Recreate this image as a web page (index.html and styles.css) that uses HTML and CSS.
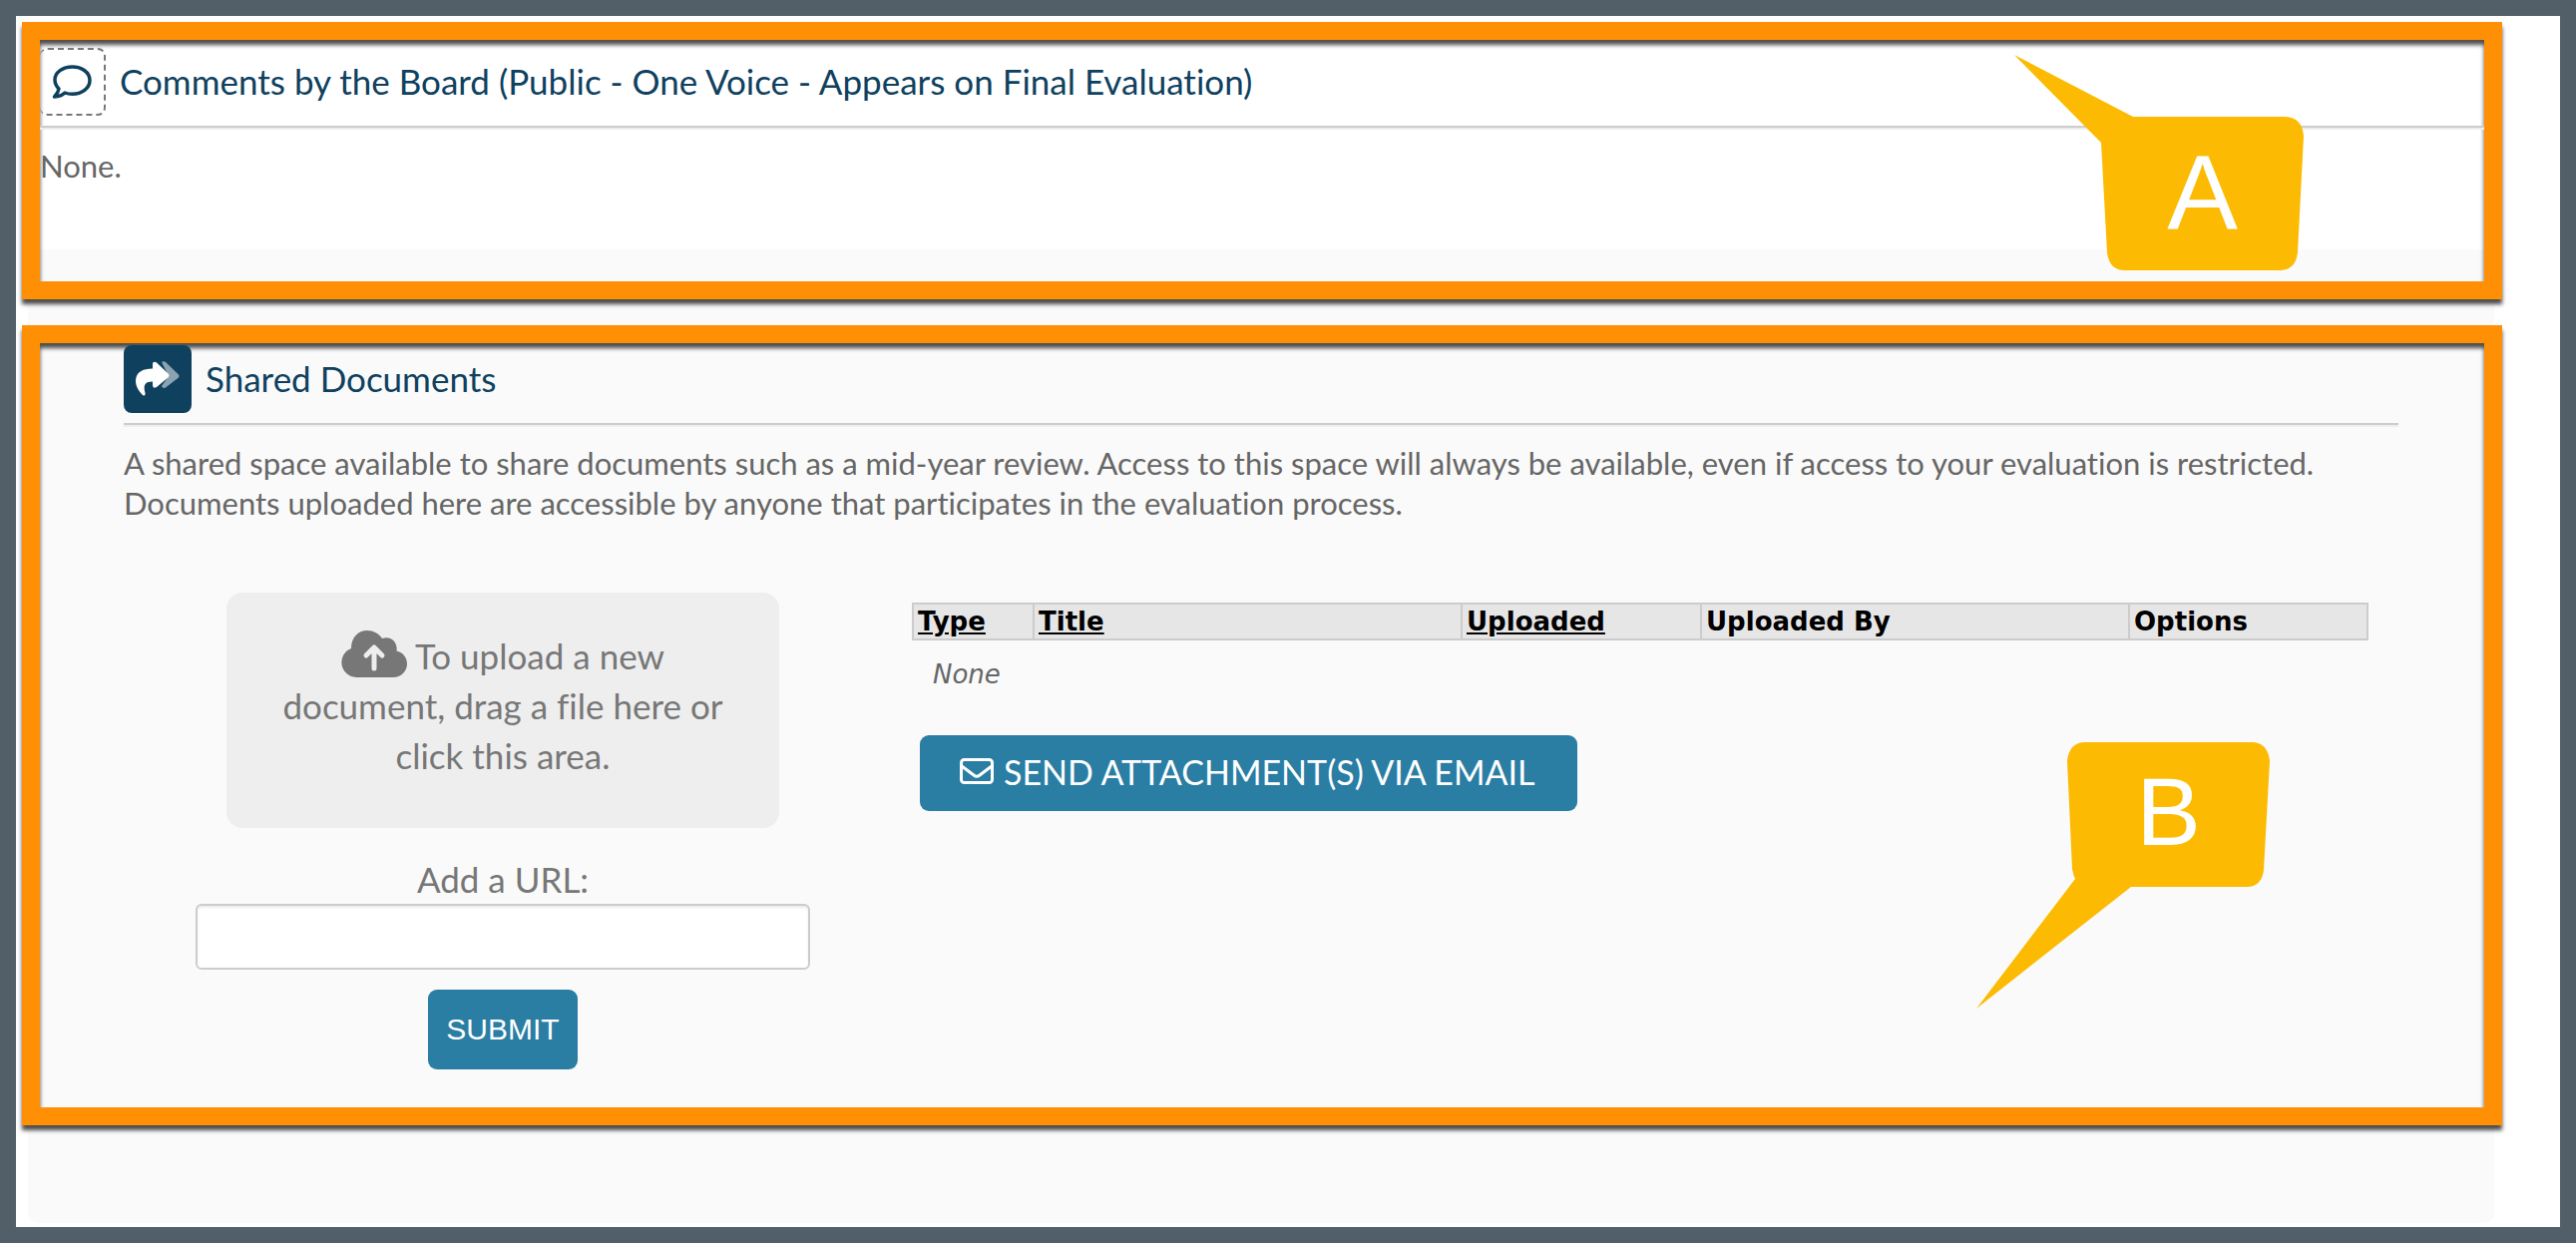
FILE: index.html
```
<!DOCTYPE html>
<html lang="en">
<head>
    <meta charset="UTF-8">
    <meta name="viewport" content="width=device-width, initial-scale=1.0">
    <title>Board Evaluation</title>
    <link rel="stylesheet" href="styles.css">
</head>
<body>

<main class="page">
    <div class="panel">
        <section class="frame comments">
            <div class="comments-body">
                <div class="section-title">
                    <span class="icon-box dashed">
                        <svg width="40" height="34" viewBox="0 0 40 34" aria-hidden="true">
                            <path d="M20.500 2C11 2 3 7.500 3 15C3 18.500 4.500 21.500 7 24C6.500 27 5 29.500 2.500 32C7 31.800 10.500 30.500 13 28C15.500 29 18 29.300 20.500 29.300C30 29.300 38 23.500 38 15.500C38 7.500 30 2 20.500 2Z" fill="none" stroke="#0f415f" stroke-width="3.500" stroke-linejoin="round"/>
                        </svg>
                    </span>
                    <h2>Comments by the Board (Public - One Voice - Appears on Final Evaluation)</h2>
                </div>
                <p class="text">None.</p>
            </div>
        </section>

        <section class="frame documents">
            <div class="section-title">
                <span class="icon-box filled">
                    <svg width="44" height="36" viewBox="0 0 44 36" aria-hidden="true">
                        <path d="M26 1C27 0 29 0 30 1L43 13.500Q44 15 43 16.500L30 26.500Q27 28 26 25L33 15Z" fill="#8ba2b0"/>
                        <path d="M17 3C17 0.500 19.500 0 21 1.500L33 13Q34 14.500 33 16L21 26Q17 28 17 24V20.500C10 20.500 7 23 9.500 32C10 34.500 8 35.500 6.500 33.500C3 30 0 25 0 20C0 11 7 7.500 17 7.500Z" fill="#fff"/>
                    </svg>
                </span>
                <h2>Shared Documents</h2>
            </div>
            <p class="text">A shared space available to share documents such as a mid-year review. Access to this space will always be available, even if access to your evaluation is restricted. Documents uploaded here are accessible by anyone that participates in the evaluation process.</p>

            <div class="columns">
                <form class="upload" action="#" method="post">
                    <button type="button" class="drop-area">
                        <svg class="cloud" width="66" height="47" viewBox="0 0 66 47" aria-hidden="true">
                            <path d="M15 47A15 15 0 0 1 10 18C10 7 17 0 26 0C32 0 38 3 41 8C49 5 57 11 55.500 20.500C62 22 66 27 66 33.500C66 41 60 47 52 47Z" fill="#777"/>
                            <path d="M33 38V18M25 25L33 17L41 25" fill="none" stroke="#eee" stroke-width="5" stroke-linecap="round" stroke-linejoin="round"/>
                        </svg>
                        To upload a new document, drag a file here or click this area.
                    </button>
                    <label for="url">Add a URL:</label>
                    <input type="text" id="url" name="url">
                    <button type="submit" class="btn submit">SUBMIT</button>
                </form>

                <div class="files">
                    <table>
                        <thead>
                            <tr>
                                <th class="col-type"><a href="#">Type</a></th>
                                <th class="col-wide"><a href="#">Title</a></th>
                                <th class="col-date"><a href="#">Uploaded</a></th>
                                <th class="col-wide">Uploaded By</th>
                                <th>Options</th>
                            </tr>
                        </thead>
                        <tbody>
                            <tr>
                                <td colspan="5">None</td>
                            </tr>
                        </tbody>
                    </table>
                    <button type="button" class="btn email">
                        <svg width="34" height="26" viewBox="0 0 34 26" aria-hidden="true">
                            <rect x="1.500" y="1.500" width="31" height="23" rx="3" fill="none" stroke="#fff" stroke-width="3"/>
                            <path d="M2 8L14 17Q17 19.500 20 17L32 8" fill="none" stroke="#fff" stroke-width="3"/>
                        </svg>
                        SEND ATTACHMENT(S) VIA EMAIL
                    </button>
                </div>
            </div>
        </section>
    </div>

    <div class="callout callout-a">
        <svg width="290" height="216" viewBox="0 0 290 216" aria-hidden="true">
            <path d="M0 0L119 62H270Q289 62 290 82L284 198Q282 216 266 216H111Q95 216 93 198L87 88Z" fill="#fcbb02"/>
        </svg>
        <span>A</span>
    </div>
    <div class="callout callout-b">
        <svg width="294" height="267" viewBox="0 0 294 267" aria-hidden="true">
            <path d="M0 267L99 137Q97 133 96 127L91 19Q93 0 109 0H276Q292 0 294 19L288 128Q286 145 271 145H155Z" fill="#fcbb02"/>
        </svg>
        <span>B</span>
    </div>
</main>

</body>
</html>
```
FILE: styles.css
```
* {
    box-sizing: border-box;
}
body {
    margin: 0;
    min-height: 100vh;
    padding: 16px;
    background-color: #525f68;
    font-family: Lato, sans-serif;
    font-variant-ligatures: none;
    color: #666;
    display: flex;
}
.page {
    position: relative;
    display: flex;
    flex: 1;
    padding: 6px 66px 4px 12px;
    background-color: #fff;
}
.panel {
    flex: 1;
    background-color: #fafafa;
    border-radius: 0 0 10px 10px;
}
.frame {
    margin: 0 -8px 0 -6px;
    border: 18px solid #ff9005;
    box-shadow: 0 5px 4px rgba(0, 0, 0, 0.7), inset 0 5px 4px rgba(0, 0, 0, 0.7);
}
h2 {
    margin: 0;
    padding-bottom: 2px;
    font-size: 35px;
    font-weight: 400;
    line-height: 44px;
    color: #0f415f;
}
.section-title {
    display: flex;
    align-items: center;
    gap: 14px;
    padding-bottom: 10px;
    border-bottom: 2px solid #ccc;
    box-shadow: 0 2px 0 #eee;
}
.icon-box {
    display: flex;
    align-items: center;
    justify-content: center;
    width: 68px;
    height: 68px;
    border-radius: 8px;
}
.dashed {
    width: 66px;
    border: 2px dashed #777;
    border-left: none;
}
.filled {
    background-color: #0f415f;
}
.text {
    margin: 0;
    padding-top: 18px;
    font-size: 31px;
    line-height: 40px;
}
.comments {
    min-height: 278px;
}
.comments-body {
    min-height: 210px;
    padding-top: 8px;
    background-color: #fff;
    box-shadow: inset 0 5px 4px rgba(0, 0, 0, 0.7);
}
.documents {
    margin-top: 26px;
    padding: 2px 86px 38px 84px;
}
.columns {
    display: flex;
    align-items: flex-start;
    gap: 102px;
    padding: 70px 30px 0 72px;
}
.upload {
    display: flex;
    flex-direction: column;
    align-items: center;
    width: 616px;
    font-size: 35px;
    line-height: 50px;
    color: #777;
}
.drop-area {
    width: 554px;
    height: 236px;
    padding: 0 50px 10px;
    border: none;
    border-radius: 16px;
    background-color: #eee;
    font: inherit;
    color: #777;
    cursor: pointer;
}
.cloud {
    vertical-align: -8px;
}
.upload label {
    margin-top: 26px;
}
.upload input {
    width: 100%;
    height: 66px;
    padding: 0 16px;
    border: 2px solid #ccc;
    border-radius: 6px;
    background-color: #fff;
    box-shadow: inset 0 2px 2px rgba(0, 0, 0, 0.08);
    font: inherit;
}
.btn {
    border: none;
    background-color: #2a7da3;
    color: #fff;
    cursor: pointer;
}
.submit {
    width: 150px;
    height: 80px;
    margin-top: 20px;
    border-radius: 9px;
    font-family: "Liberation Sans", sans-serif;
    font-size: 30px;
}
.files {
    flex: 1;
    padding-top: 10px;
}
table {
    width: 100%;
    border-collapse: collapse;
    table-layout: fixed;
    font-family: "DejaVu Sans", sans-serif;
    font-size: 26px;
    line-height: 32px;
}
th {
    padding: 1px 4px;
    border: 2px solid #ccc;
    background-color: #e6e6e6;
    color: #000;
    text-align: left;
}
th a {
    color: #000;
}
td {
    padding: 18px 20px;
    font-style: italic;
}
.col-type {
    width: 121px;
}
.col-wide {
    width: 429px;
}
.col-date {
    width: 240px;
}
.email {
    display: flex;
    align-items: center;
    gap: 10px;
    height: 76px;
    margin: 27px 0 0 8px;
    padding: 0 42px 4px 40px;
    border-radius: 9px;
    font-family: Lato, sans-serif;
    font-size: 34px;
}
.callout {
    position: absolute;
    color: #fff;
    font-family: "Liberation Sans", sans-serif;
}
.callout svg {
    display: block;
}
.callout span {
    position: absolute;
    right: 0;
    width: 203px;
    text-align: center;
}
.callout-a {
    top: 39px;
    right: 257px;
    font-size: 106px;
    line-height: 144px;
}
.callout-a span {
    bottom: 7px;
}
.callout-b {
    top: 728px;
    right: 291px;
    font-size: 97px;
    line-height: 140px;
}
.callout-b span {
    top: 0;
}
```
